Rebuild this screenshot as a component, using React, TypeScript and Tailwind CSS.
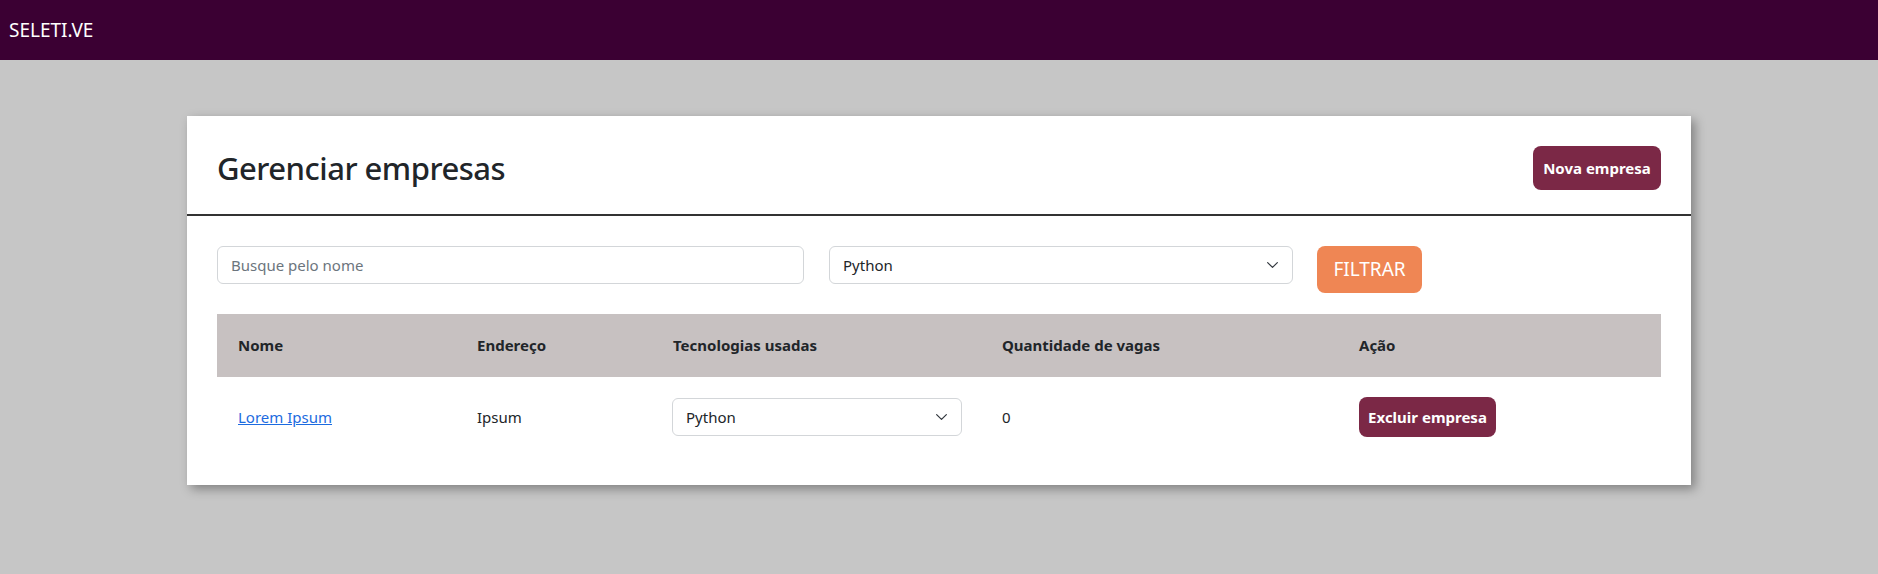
import React from 'react';

function Chevron() {
  return (
    <svg
      className="absolute right-[14px] top-1/2 -translate-y-1/2 pointer-events-none"
      width="13"
      height="13"
      viewBox="0 0 16 16"
      fill="none"
    >
      <path d="m2 5 6 6 6-6" stroke="#343a40" strokeWidth="1.5" strokeLinecap="round" strokeLinejoin="round" />
    </svg>
  );
}

function SelectBox({ className }: { className: string }) {
  return (
    <div className={`relative ${className}`}>
      <select
        defaultValue="python"
        className="appearance-none w-full h-full border border-[#d3d6d9] rounded-[6px] pl-[13px] pr-9 text-[15px] text-[#212529] bg-white focus:outline-none"
      >
        <option value="python">Python</option>
        <option value="java">Java</option>
        <option value="js">JavaScript</option>
      </select>
      <Chevron />
    </div>
  );
}

export default function App() {
  return (
    <div className="min-h-[574px] bg-[#c6c6c6] font-['Noto_Sans',sans-serif] text-[#212529]">
      <header className="h-[60px] bg-[#3b0033] flex items-center px-[9px]">
        <span className="text-white text-[19px]">SELETI.VE</span>
      </header>

      <main className="pt-[56px] pb-[89px]">
        <div className="w-[1504px] mx-auto bg-white shadow-[4px_4px_10px_rgba(0,0,0,0.35)]">
          <div className="flex items-center justify-between px-[30px] pt-[30px] pb-[24px] border-b-2 border-[#333]">
            <h2 className="text-[31px] font-medium leading-none tracking-[-0.5px]">Gerenciar empresas</h2>
            <button className="w-[128px] h-[44px] rounded-lg bg-[#7b2846] text-white text-[15px] font-bold">
              Nova empresa
            </button>
          </div>

          <div className="px-[30px] pt-[30px] pb-[28px]">
            <div className="flex items-start">
              <input
                type="text"
                placeholder="Busque pelo nome"
                className="w-[587px] h-[38px] border border-[#d3d6d9] rounded-[6px] px-[13px] text-[15px] placeholder:text-[#6c757d] focus:outline-none"
              />
              <SelectBox className="w-[464px] h-[38px] ml-[25px]" />
              <button className="w-[105px] h-[47px] ml-[24px] rounded-lg bg-[#ef8654] text-white text-[19px]">
                FILTRAR
              </button>
            </div>

            <table className="w-full table-fixed mt-[21px] text-[15px]">
              <colgroup>
                <col className="w-[239px]" />
                <col className="w-[196px]" />
                <col className="w-[329px]" />
                <col className="w-[357px]" />
                <col />
              </colgroup>
              <thead>
                <tr className="bg-[#c7c1c1] h-[63px] text-left">
                  <th className="pl-[21px] font-bold">Nome</th>
                  <th className="pl-[21px] font-bold">Endereço</th>
                  <th className="pl-[21px] font-bold">Tecnologias usadas</th>
                  <th className="pl-[21px] font-bold">Quantidade de vagas</th>
                  <th className="pl-[21px] font-bold">Ação</th>
                </tr>
              </thead>
              <tbody>
                <tr className="h-[80px]">
                  <td className="pl-[21px]">
                    <a href="#" className="text-[#1c6be0] underline">
                      Lorem Ipsum
                    </a>
                  </td>
                  <td className="pl-[21px]">Ipsum</td>
                  <td className="pl-[20px]">
                    <SelectBox className="w-[290px] h-[38px]" />
                  </td>
                  <td className="pl-[21px]">0</td>
                  <td className="pl-[21px]">
                    <button className="w-[137px] h-[40px] rounded-lg bg-[#7b2846] text-white text-[15px] font-bold">
                      Excluir empresa
                    </button>
                  </td>
                </tr>
              </tbody>
            </table>
          </div>
        </div>
      </main>
    </div>
  );
}
